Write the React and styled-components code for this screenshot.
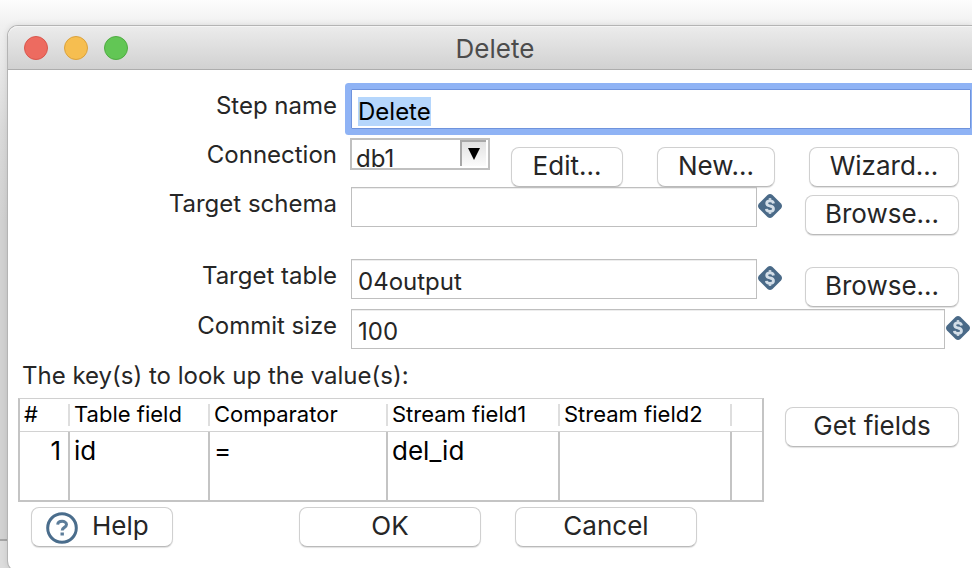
import React, { useEffect, useRef } from "react";
import styled, { createGlobalStyle } from "styled-components";

const GlobalStyle = createGlobalStyle`
  *, *::before, *::after { box-sizing: border-box; }
  html, body { margin: 0; }
  body, input, select, button, table {
    font-family: Inter, "Liberation Sans", sans-serif;
    color: #262626;
  }
`;

const Desktop = styled.div`
  height: 100vh;
  overflow: hidden;
  padding: 26px 0 0 8px;
  background:
    linear-gradient(to bottom, transparent calc(100% - 29px), #a6a6a6 calc(100% - 29px), #a6a6a6 calc(100% - 27px), #dcdcdc calc(100% - 27px)),
    linear-gradient(to bottom, #fdfdfd 0, #f0f0f0 26px, #dadada 130px, #d2d2d2 220px);
`;

const Window = styled.main`
  background: #fff;
  border-radius: 10px 0 0 10px;
  box-shadow: 0 0 0 1px #b4b4b4, 0 0 6px 1px rgba(0, 0, 0, 0.1);
`;

const TitleBar = styled.header`
  display: grid;
  grid-template-columns: 1fr auto 1fr;
  align-items: center;
  height: 44px;
  padding: 0 0 0 16px;
  border-radius: 10px 0 0 0;
  border-bottom: 1px solid #adadad;
  background: linear-gradient(to bottom, #ececec, #d1d1d1);
  box-shadow: inset 0 1px 0 #f5f5f5;
`;

const Lights = styled.div`
  display: flex;
  gap: 16px;
`;

const Light = styled.button`
  width: 24px;
  height: 24px;
  padding: 0;
  border-radius: 50%;
  border: 1px solid ${(p) => p.$edge};
  background: ${(p) => p.$fill};
`;

const Title = styled.h1`
  margin: 0;
  padding: 2px 6px 0 0;
  font-size: 26px;
  font-weight: 400;
  line-height: 32px;
  color: #4c4c4c;
`;

const Body = styled.form`
  padding: 19px 0 24px;
`;

const Row = styled.div`
  display: grid;
  grid-template-columns: 329px minmax(0, 1fr);
  column-gap: 14px;
  margin-top: ${(p) => p.$top || 0}px;
`;

const Label = styled.label`
  font-size: 24px;
  line-height: 34px;
  text-align: right;
  white-space: nowrap;
`;

const Controls = styled.div`
  display: flex;
  align-items: flex-start;
  gap: ${(p) => p.$gap || 0}px;
  padding-right: ${(p) => p.$end || 0}px;
`;

const TextInput = styled.input`
  flex: 1;
  min-width: 0;
  height: 40px;
  padding: 5px 6px 1px;
  border: 1px solid #bfbfbf;
  border-radius: 0;
  background: #fff;
  box-shadow: inset 0 1px 0 #ededed;
  font-size: 24px;
  line-height: 32px;
  outline: none;

  &:focus {
    border-color: #6f93dc;
    border-radius: 1px;
    box-shadow: 0 0 0 6px #8fb3f5;
    color: #000;
  }
  &::selection {
    background: #b5d6fc;
    color: #000;
  }
`;

const SelectBox = styled.div`
  position: relative;
  width: 140px;
  height: 32px;
  margin-left: -1px;
`;

const Select = styled.select`
  appearance: none;
  display: block;
  width: 100%;
  height: 100%;
  padding: 5px 30px 0 4px;
  border: 2px solid #c0c0c0;
  border-radius: 0;
  background: #fff;
  font-size: 24px;
  line-height: 28px;
`;

const SelectArrow = styled.span`
  position: absolute;
  top: 2px;
  right: 4px;
  display: grid;
  place-items: center;
  width: 26px;
  height: 26px;
  border: solid #a8a8a8;
  border-width: 2px 0 0 2px;
  background: linear-gradient(to bottom, #e2e2e2, #fbfbfb);
  pointer-events: none;
`;

const Button = styled.button`
  display: flex;
  align-items: center;
  justify-content: center;
  gap: 14px;
  flex: none;
  width: ${(p) => p.$width}px;
  height: 40px;
  padding: 0 0 2px;
  border: 1px solid #d0d0d0;
  border-bottom-color: #bababa;
  border-radius: 8px;
  background: #fff;
  box-shadow: 0 1px 1px rgba(0, 0, 0, 0.12);
  font-size: 26px;
  line-height: 32px;
  white-space: nowrap;
`;

const HelpButton = styled(Button)`
  justify-content: flex-start;
  padding-left: 14px;

  & > svg {
    flex: none;
    margin-top: 4px;
  }
`;

const ConnectionActions = styled.div`
  display: flex;
  flex: 1;
  gap: 34px;
  padding-top: 9px;

  & > :last-child {
    margin-left: auto;
  }
`;

const BrowseSlot = styled.div`
  padding: 8px 0 0 23px;
`;

const VariableMark = styled.svg`
  flex: none;
  width: 24px;
  height: 24px;
  margin: 7px 0 0 1px;
`;

const KeysHeading = styled.h2`
  margin: 0;
  padding: 11px 14px 7px;
  font-size: 24px;
  font-weight: 400;
  line-height: 31px;
`;

const KeysArea = styled.section`
  display: flex;
  align-items: flex-start;
  gap: 21px;
  padding: 0 13px 0 10px;
`;

const TableFrame = styled.div`
  flex: 1;
  min-width: 0;
  border: 2px solid #c4c4c4;
  border-top: 1px solid #d0d0d0;
`;

const Table = styled.table`
  width: 100%;
  table-layout: fixed;
  border-collapse: separate;
  border-spacing: 0;
  color: #000;
`;

const HeadCell = styled.th`
  height: 33px;
  padding: 0 0 2px 4px;
  border-bottom: 1px solid #d2d2d2;
  background: linear-gradient(#dedede, #dedede) no-repeat right 5px / 2px 22px;
  font-size: 22px;
  font-weight: 400;
  line-height: 28px;
  text-align: left;
  white-space: nowrap;

  &:last-child { background: none; }
`;

const Cell = styled.td`
  height: 68px;
  padding: 3px ${(p) => (p.$number ? 7 : 4)}px 0 4px;
  border-right: 2px solid #c4c4c4;
  font-size: 26px;
  line-height: 32px;
  text-align: ${(p) => (p.$number ? "right" : "left")};
  vertical-align: top;

  &:last-child { border-right: 0; }
`;

const GetFieldsSlot = styled.div`
  padding-top: 9px;
`;

const Footer = styled.footer`
  display: flex;
  gap: 126px;
  padding: 5px 23px 0;
`;

const Choices = styled.div`
  display: flex;
  gap: 34px;
`;

function Variable() {
  return (
    <VariableMark viewBox="0 0 24 24" aria-hidden="true">
      <path d="M9.500 1Q12-1 14.500 1L23 9.500Q25 12 23 14.500L14.500 23Q12 25 9.500 23L1 14.500Q-1 12 1 9.500Z" fill="#4a6a88" />
      <path d="M12 4V6.500M12 17.500V20" fill="none" stroke="#c3d0dc" strokeWidth="2.500" />
      <path d="M15.500 9.500Q15.200 6.800 12 6.800Q8.700 6.800 8.700 9.200Q8.700 11.300 12 12Q15.500 12.600 15.500 15Q15.500 17.300 12 17.300Q8.600 17.300 8.400 14.800" fill="none" stroke="#d3dee8" strokeWidth="2.800" />
    </VariableMark>
  );
}

function HelpIcon() {
  return (
    <svg width="32" height="32" viewBox="0 0 32 32" aria-hidden="true">
      <circle cx="16" cy="16" r="14.300" fill="#fff" stroke="#4a6d8c" strokeWidth="3" />
      <path d="M11.700 12.600C11.900 8.200 20.500 8.200 20.500 12.600C20.500 15.600 16.200 15.200 16.200 18.500" fill="none" stroke="#5c7d9a" strokeWidth="3" />
      <rect x="14.500" y="20.500" width="3.400" height="3" fill="#5c7d9a" />
    </svg>
  );
}

const columns = [
  { title: "#", width: 50 },
  { title: "Table field", width: 140 },
  { title: "Comparator", width: 178 },
  { title: "Stream field1", width: 172 },
  { title: "Stream field2", width: 172 },
  { title: "" },
];

const rows = [["1", "id", "=", "del_id", "", ""]];

const Col = styled.col`
  width: ${(p) => (p.$width ? `${p.$width}px` : "auto")};
`;

export default function App() {
  const stepName = useRef(null);

  useEffect(() => {
    stepName.current.focus();
    stepName.current.select();
  }, []);

  return (
    <>
      <GlobalStyle />
      <Desktop>
        <Window>
          <TitleBar>
            <Lights>
              <Light type="button" aria-label="Close" $fill="#ed6b60" $edge="#d9574d" />
              <Light type="button" aria-label="Minimize" $fill="#f6be50" $edge="#dba23c" />
              <Light type="button" aria-label="Zoom" $fill="#62c655" $edge="#4fac42" />
            </Lights>
            <Title>Delete</Title>
          </TitleBar>
          <Body onSubmit={(e) => e.preventDefault()}>
            <Row>
              <Label htmlFor="step">Step name</Label>
              <Controls $end={1}>
                <TextInput id="step" ref={stepName} defaultValue="Delete" />
              </Controls>
            </Row>
            <Row $top={9}>
              <Label htmlFor="connection">Connection</Label>
              <Controls $gap={21} $end={13}>
                <SelectBox>
                  <Select id="connection" defaultValue="db1">
                    <option>db1</option>
                  </Select>
                  <SelectArrow>
                    <svg width="12" height="12" viewBox="0 0 12 12" aria-hidden="true">
                      <path d="M0 0H12L6 12Z" fill="#000" />
                    </svg>
                  </SelectArrow>
                </SelectBox>
                <ConnectionActions>
                  <Button type="button" $width={112}>Edit...</Button>
                  <Button type="button" $width={118}>New...</Button>
                  <Button type="button" $width={150}>Wizard...</Button>
                </ConnectionActions>
              </Controls>
            </Row>
            <Row>
              <Label htmlFor="schema">Target schema</Label>
              <Controls $end={13}>
                <TextInput id="schema" defaultValue="" />
                <Variable />
                <BrowseSlot>
                  <Button type="button" $width={154}>Browse...</Button>
                </BrowseSlot>
              </Controls>
            </Row>
            <Row $top={24}>
              <Label htmlFor="table">Target table</Label>
              <Controls $end={13}>
                <TextInput id="table" defaultValue="04output" />
                <Variable />
                <BrowseSlot>
                  <Button type="button" $width={154}>Browse...</Button>
                </BrowseSlot>
              </Controls>
            </Row>
            <Row $top={2}>
              <Label htmlFor="commit">Commit size</Label>
              <Controls $end={2}>
                <TextInput id="commit" defaultValue="100" />
                <Variable />
              </Controls>
            </Row>
            <KeysHeading id="keys">The key(s) to look up the value(s):</KeysHeading>
            <KeysArea>
              <TableFrame>
                <Table aria-labelledby="keys">
                  <colgroup>
                    {columns.map((c, i) => <Col key={i} $width={c.width} />)}
                  </colgroup>
                  <thead>
                    <tr>
                      {columns.map((c, i) => <HeadCell key={i} scope="col">{c.title}</HeadCell>)}
                    </tr>
                  </thead>
                  <tbody>
                    {rows.map((r) => (
                      <tr key={r[0]}>
                        {r.map((v, i) => <Cell key={i} $number={i === 0}>{v}</Cell>)}
                      </tr>
                    ))}
                  </tbody>
                </Table>
              </TableFrame>
              <GetFieldsSlot>
                <Button type="button" $width={174}>Get fields</Button>
              </GetFieldsSlot>
            </KeysArea>
            <Footer>
              <HelpButton type="button" $width={142}>
                <HelpIcon />
                Help
              </HelpButton>
              <Choices>
                <Button type="submit" $width={182}>OK</Button>
                <Button type="button" $width={182}>Cancel</Button>
              </Choices>
            </Footer>
          </Body>
        </Window>
      </Desktop>
    </>
  );
}
